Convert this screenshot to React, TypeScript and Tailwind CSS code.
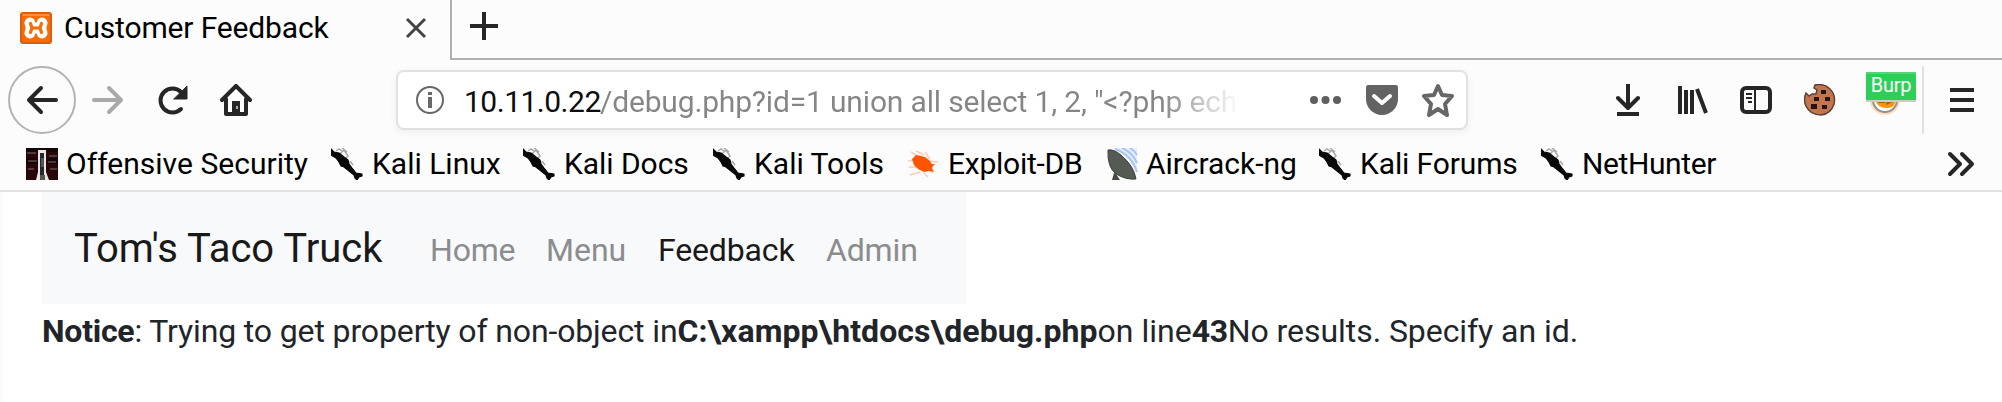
import React from 'react';

const D = '#262626';

function Kali() {
  return (
    <svg width="32" height="32" viewBox="0 0 32 32">
      <path d="M5 3L8 1L11 3M9 6L13 2L17 8L14 11M11 0L16 4M19 13L22 17" stroke="#a8a8a8" strokeWidth="1.5" fill="none" />
      <path d="M0 1L3 4L8 5L13 9L17 12L18 16L21 20L25 25L31 26L31 28L28 29L26 32L24 30L23 27L18 23L13 19L10 18L8 14L5 10L0 7Z" fill="#080808" stroke="#080808" strokeWidth="1.2" strokeLinejoin="round" />
    </svg>
  );
}
function OffSec() {
  return (
    <svg width="32" height="32" viewBox="0 0 32 32">
      <rect width="32" height="32" fill="#2a0608" />
      <path d="M0 0H32V4H0ZM0 10H12V16H0ZM22 10H32V16H22Z" fill="#140607" />
      <path d="M1 5H10M2 13H11M2 21H8M23 8H31M22 14H30M24 21H31" stroke="#5a4c4e" strokeWidth="1.5" />
      <path d="M12 2H20V24L23 32H10L12 24Z" fill="#e8e6e6" />
      <path d="M14 5H18V27H14Z" fill="#26282a" />
      <path d="M15 10H18V19H15ZM14 27H19V32H14Z" fill="#555" />
    </svg>
  );
}
function Exploit() {
  return (
    <svg width="32" height="32" viewBox="0 0 32 32" fill="none">
      <path d="M4 4L12 9M9 3L17 7M18 4L23 11M1 13L8 12M22 13L31 14M3 27L13 24M17 25L21 29M2 19L9 19M22 22L26 25" stroke="#ffc9b3" strokeWidth="1.5" />
      <path d="M5 11L9 7L14 8L18 9L22 12L25 16L28 16L26 18L25 20L27 24L22 23L17 24L11 21L7 17Z" fill="#ff5500" />
    </svg>
  );
}
function Aircrack() {
  return (
    <svg width="32" height="32" viewBox="0 0 32 32">
      <path d="M7 0H31V26Q24 8 7 0Z" fill="#e7effd" />
      <path d="M9 1Q25 6 31 24M16 0Q26 4 31 15M24 0Q29 3 31 7" stroke="#a9c4f6" strokeWidth="2" fill="none" />
      <path d="M2 2Q8 1 15 7Q28 18 30 31Q20 32 10 26Q1 19 2 2Z" fill="#565a54" stroke="#3e423d" />
      <path d="M8 25L6 32H14L10 26Z" fill="#4a463f" />
    </svg>
  );
}

const marks = [
  { label: 'Offensive Security', icon: OffSec, slot: 'w-[305px]', text: 'ml-[8px] tracking-[0.03px]' },
  { label: 'Kali Linux', icon: Kali, slot: 'w-[192px]', text: 'ml-[9px]' },
  { label: 'Kali Docs', icon: Kali, slot: 'w-[190px]', text: 'ml-[9px] tracking-[-0.04px]' },
  { label: 'Kali Tools', icon: Kali, slot: 'w-[194px]', text: 'ml-[9px]' },
  { label: 'Exploit-DB', icon: Exploit, slot: 'w-[199px]', text: 'ml-[9px] tracking-[-0.25px]' },
  { label: 'Aircrack-ng', icon: Aircrack, slot: 'w-[213px]', text: 'ml-[8px]' },
  { label: 'Kali Forums', icon: Kali, slot: 'w-[222px]', text: 'ml-[9px] tracking-[-0.12px]' },
  { label: 'NetHunter', icon: Kali, slot: 'w-[220px]', text: 'ml-[9px] tracking-[-0.4px]' },
];

function ToolbarButtons() {
  return (
    <>
      <svg className="ml-[148px]" width="24" height="32" viewBox="0 0 24 32" fill="none" stroke={D} strokeWidth="4"><path d="M12 0V23" /><path d="M2 14L12 24L22 14" strokeLinecap="round" strokeLinejoin="round" /><path d="M1 30H23" /></svg>
      <svg className="ml-[38px]" width="32" height="28" viewBox="0 0 32 28" fill="none" stroke={D} strokeWidth="4"><path d="M2 0V28M8 4V28M14 4V28M19 3L28 27" /></svg>
      <svg className="ml-[30px]" width="32" height="28" viewBox="0 0 32 28" fill="none" stroke={D}><rect x="2" y="2" width="28" height="24" rx="4" strokeWidth="4" /><path d="M15 3V25M6 8H12M6 12H12M8 16H12" strokeWidth="2" /></svg>
      <svg className="ml-[32px]" width="32" height="32" viewBox="0 0 32 32">
        <path d="M11 1Q20 -1 26 5Q32 11 30 20Q27 30 17 31Q6 31 2 22Q-1 16 2 9L5 12L8 10L12 10L13 6L10 4Z" fill="#c17650" stroke="#5c4237" strokeWidth="1.5" />
        <path d="M17 6H22V10H17ZM10 13H15V17H10ZM21 13H26V17H21ZM7 20H13V25H7ZM18 21H23V25H18Z" fill="#27130f" />
      </svg>
      <div className="relative ml-[34px] h-[32px] w-[32px]">
        <svg width="32" height="32" viewBox="0 0 32 32"><circle cx="15" cy="16" r="15" fill="#ffdcb7" /><circle cx="15" cy="16" r="12" fill="#fff" stroke="#929292" strokeWidth="2" /><path d="M4 14H26Q26 24 17 24Q7 24 4 14Z" fill="#ff9505" /><path d="M8 18H15M16 20L22 17" stroke="#9d6228" strokeWidth="2" /></svg>
        <div className="absolute left-[-4px] top-[-12px] flex h-[30px] w-[50px] items-center justify-center border-b-2 border-t-2 border-b-[#c4d0c8] border-t-[#55d577] bg-[#2dcf58] pb-[4px] text-[20px] leading-none tracking-[-0.2px] text-white">Burp</div>
      </div>
      <div className="ml-[20px] h-[68px] w-[2px] bg-[#e0e0e0]" />
      <svg className="ml-[26px]" width="24" height="24" viewBox="0 0 24 24" stroke={D} strokeWidth="4"><path d="M0 2H24M0 12H24M0 22H24" /></svg>
    </>
  );
}

const links = [
  { label: 'Home', style: 'w-[116px] tracking-[-0.2px] text-[#8b8c8d]' },
  { label: 'Menu', style: 'w-[112px] text-[#8b8c8d]' },
  { label: 'Feedback', style: 'w-[168px] tracking-[-0.15px] text-[#191919]' },
  { label: 'Admin', style: 'tracking-[-0.15px] text-[#8b8c8d]' },
];

export default function App() {
  return (
    <div className="h-[402px] w-[2002px] overflow-hidden bg-white font-['Roboto',sans-serif] text-[30px]">
      <header className="h-[192px] border-b-2 border-[#e1e1e2] bg-[#fcfcfc]">
        <div className="flex h-[60px]">
          <div className="flex h-[60px] w-[450px] items-center pb-[4px] pl-[20px]">
            <svg width="32" height="32" viewBox="0 0 32 32" fill="none" strokeLinecap="round" strokeLinejoin="round">
              <rect x="1" y="1" width="30" height="30" rx="2" fill="#fa6b05" stroke="#d9600f" strokeWidth="2" />
              <path d="M3 3H29" stroke="#fc9c5c" strokeWidth="1.5" />
              <path d="M10 11L11.500 16L10 21M22 11L20.500 16L22 21M11 16H21" stroke="#fff" strokeWidth="11" />
              <path d="M10.500 11.500L12 16L10.500 20.500M21.500 11.500L20 16L21.500 20.500M12 16H20" stroke="#fa6b05" strokeWidth="3.2" />
              <path d="M16 6V9M16 23V26" stroke="#fa6b05" strokeWidth="2.400" />
            </svg>
            <span className="-mt-[2px] ml-[12px] w-[340px] whitespace-nowrap tracking-[-0.15px] text-black">Customer Feedback</span>
            <svg width="24" height="24" viewBox="0 0 24 24" stroke="#444" strokeWidth="3"><path d="M3 3L21 21M21 3L3 21" /></svg>
          </div>
          <div className="flex flex-1 items-start border-b-2 border-l-2 border-[#b0b0b0] pl-[18px] pt-[12px]">
            <svg width="28" height="28" viewBox="0 0 28 28" stroke={D} strokeWidth="4"><path d="M14 0V28M0 14H28" /></svg>
          </div>
        </div>

        <div className="flex h-[80px] items-center">
          <div className="ml-[8px] flex h-[68px] w-[68px] items-center justify-center rounded-full border-2 border-[#b3b3b3]">
            <svg width="32" height="32" viewBox="0 0 32 32" fill="none" stroke={D} strokeWidth="4" strokeLinecap="round" strokeLinejoin="round"><path d="M30 16H3M15 4L3 16L15 28" /></svg>
          </div>
          <svg className="ml-[16px]" width="32" height="32" viewBox="0 0 32 32" fill="none" stroke="#a9a9a9" strokeWidth="4" strokeLinecap="round" strokeLinejoin="round"><path d="M2 16L29 16M17 4L29 16L17 28" /></svg>
          <svg className="ml-[32px]" width="32" height="32" viewBox="0 0 32 32" fill="none" stroke={D} strokeWidth="4" strokeLinecap="round"><path d="M25 8A12 12 0 1 0 25 25" /><path d="M31 2.500V15H18Z" fill={D} stroke={D} strokeWidth="1" /></svg>
          <svg className="ml-[32px]" width="32" height="32" viewBox="0 0 32 32" fill="none" stroke={D} strokeWidth="4" strokeLinejoin="round" strokeLinecap="round"><path d="M2 16L16 2L30 16M6 15V30H26V15" /><path d="M12 17H20V30H12Z" fill={D} stroke="none" /><rect x="16" y="22" width="2" height="3" fill="#aaa" stroke="none" /></svg>
          <div className="ml-[144px] flex h-[60px] w-[1072px] shrink-0 items-center rounded-[8px] border-2 border-[#e1e1e1] bg-white shadow-[0_2px_8px_rgba(0,0,0,0.06)]">
            <svg className="ml-[18px]" width="28" height="28" viewBox="0 0 28 28"><circle cx="14" cy="14" r="13" fill="none" stroke="#686868" strokeWidth="2" /><path d="M12 6H16V9H12ZM12 11H16V22H12Z" fill="#686868" /></svg>
            <div className="ml-[20px] mt-[2px] flex w-[780px] whitespace-nowrap">
              <span className="w-[136px] tracking-[-0.5px] text-[#0c0c0d]">10.11.0.22</span>
              <span className="bg-[linear-gradient(to_right,#858585_560px,transparent_640px)] bg-clip-text tracking-[-0.17px] text-transparent">/debug.php?id=1 union all select 1, 2, "&lt;?php ech</span>
            </div>
            <svg className="ml-[64px] shrink-0" width="34" height="28" viewBox="0 0 34 28" fill="#5f5f5f"><circle cx="6" cy="14" r="4" /><circle cx="17.500" cy="14" r="4" /><circle cx="29" cy="14" r="4" /></svg>
            <svg className="ml-[24px] shrink-0" width="32" height="32" viewBox="0 0 32 32"><path d="M2 1H30Q32 1 32 4V15A16 16 0 0 1 0 15V4Q0 1 2 1Z" fill="#636363" /><path d="M8 12L16 19L24 12" fill="none" stroke="#fff" strokeWidth="4" strokeLinecap="round" strokeLinejoin="round" /></svg>
            <svg className="ml-[24px] shrink-0" width="32" height="34" viewBox="0 0 32 34"><path d="M16 3L20 12L30 13L23 21L25 32L16 26L7 32L9 21L2 13L12 12Z" fill="none" stroke="#666" strokeWidth="4" strokeLinejoin="round" /></svg>
          </div>
          <ToolbarButtons />
        </div>

        <div className="flex h-[48px] items-center pl-[26px]">
          {marks.map(({ label, icon: Icon, slot, text }) => (
            <div key={label} className={'flex shrink-0 items-center ' + slot}>
              <div className="w-[32px] shrink-0"><Icon /></div>
              <span className={'-mt-[2px] whitespace-nowrap text-black ' + text}>{label}</span>
            </div>
          ))}
          <svg className="ml-[186px]" width="28" height="26" viewBox="0 0 28 26" fill="none" stroke={D} strokeWidth="4" strokeLinecap="round" strokeLinejoin="round"><path d="M3 3L13 13L3 23M15 3L25 13L15 23" /></svg>
        </div>
      </header>
      <main className="h-[210px] border-l-2 border-[#fafafa] pl-[40px] text-[#212529]">
        <nav className="flex h-[112px] w-[924px] items-start bg-[#f8f9fa] pl-[32px] pt-[26px] leading-[60px]">
          <span className="mt-[1px] w-[356px] text-[40px] text-[#191919]">Tom's Taco Truck</span>
          {links.map((l) => <a key={l.label} className={'mt-[2px] text-[32px] ' + l.style}>{l.label}</a>)}
        </nav>
        <p className="mt-[3px] whitespace-nowrap text-[32px] leading-[48px]">
          <b className="tracking-[-0.25px]">Notice</b><span className="tracking-[-0.13px]">: Trying to get property of non-object in</span><b className="tracking-[0.08px]">C:\xampp\htdocs\debug.php</b><span>on line</span><b className="tracking-[-0.3px]">43</b><span className="tracking-[-0.06px]">No results. Specify an id.</span>
        </p>
      </main>
    </div>
  );
}
